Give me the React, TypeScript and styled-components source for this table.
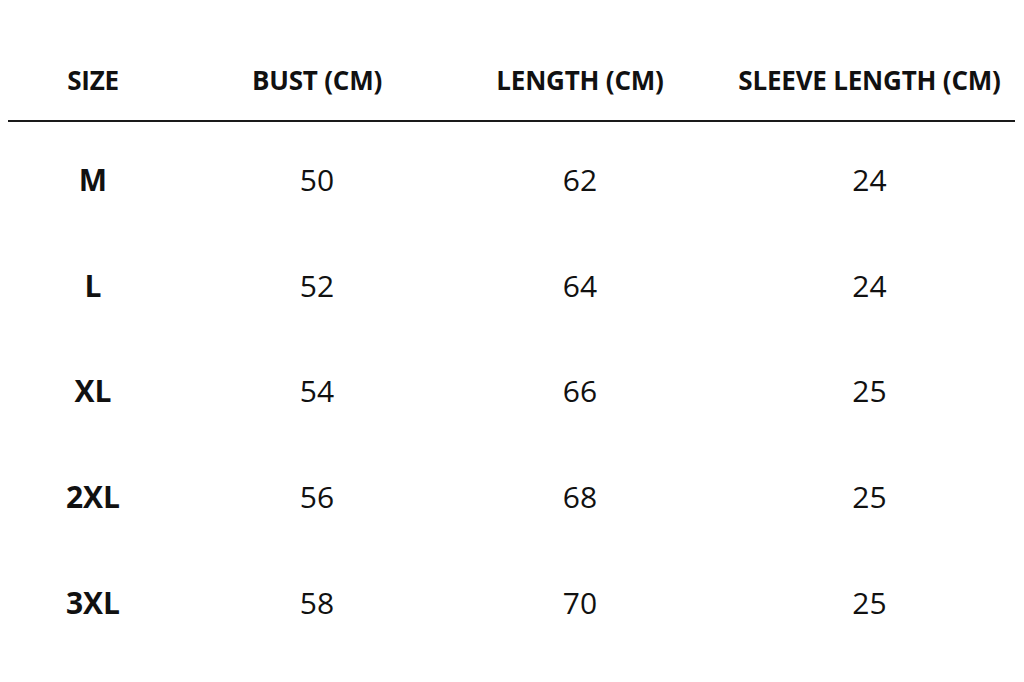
import React from 'react';
import styled, { createGlobalStyle } from 'styled-components';

const GlobalStyle = createGlobalStyle`
  html, body {
    margin: 0;
    padding: 0;
    background: #ffffff;
  }
  body {
    font-family: "Open Sans", "Noto Sans", sans-serif;
    color: #111111;
  }
`;

const Page = styled.div`
  width: 1024px;
  height: 682px;
  box-sizing: border-box;
  padding: 40px 9px 0 8px;
  background: #ffffff;
  overflow: hidden;
`;

const columns = '190px 238px 288px 291px';

const HeaderRow = styled.div`
  display: grid;
  grid-template-columns: ${columns};
  height: 80px;
  align-items: center;
  border-bottom: 2px solid #1a1a1a;
`;

const Body = styled.div`
  padding-top: 6px;
`;

const Row = styled.div`
  display: grid;
  grid-template-columns: ${columns};
  height: 105.75px;
  align-items: center;
`;

const Cell = styled.div<{ $first?: boolean; $head?: boolean; $bold?: boolean }>`
  text-align: center;
  white-space: nowrap;
  padding-right: ${(p) => (p.$first ? '20px' : '0')};
  font-size: ${(p) => (p.$head ? '26px' : '30px')};
  font-weight: ${(p) => (p.$head || p.$bold ? 700 : 400)};
  letter-spacing: ${(p) => (p.$head ? '-0.2px' : '0')};
  line-height: 1;
  margin-top: ${(p) => (p.$head ? '0' : '-2px')};
`;

const headers = ['SIZE', 'BUST (CM)', 'LENGTH (CM)', 'SLEEVE LENGTH (CM)'];

const rows: [string, number, number, number][] = [
  ['M', 50, 62, 24],
  ['L', 52, 64, 24],
  ['XL', 54, 66, 25],
  ['2XL', 56, 68, 25],
  ['3XL', 58, 70, 25],
];

export default function App() {
  return (
    <>
      <GlobalStyle />
      <Page>
        <HeaderRow>
          {headers.map((h, i) => (
            <Cell key={h} $head $first={i === 0}>
              {h}
            </Cell>
          ))}
        </HeaderRow>
        <Body>
          {rows.map(([size, bust, length, sleeve]) => (
            <Row key={size}>
              <Cell $first $bold>
                {size}
              </Cell>
              <Cell>{bust}</Cell>
              <Cell>{length}</Cell>
              <Cell>{sleeve}</Cell>
            </Row>
          ))}
        </Body>
      </Page>
    </>
  );
}
